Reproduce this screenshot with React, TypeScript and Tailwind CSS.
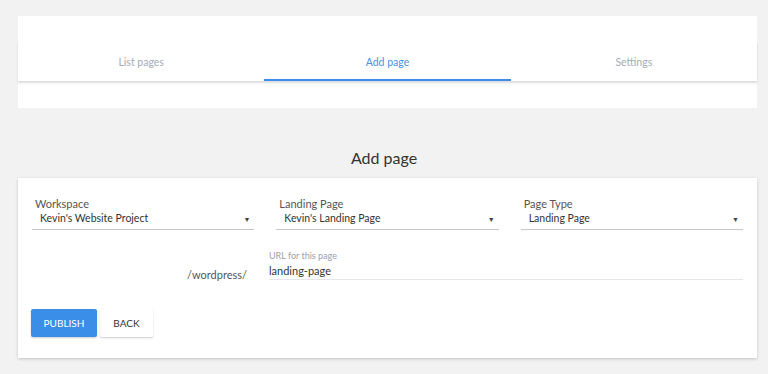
import React from "react";

const tabs = [
  { label: "List pages", active: false },
  { label: "Add page", active: true },
  { label: "Settings", active: false },
];

function Caret() {
  return <span className="text-[7px] text-[#444] leading-none">▼</span>;
}

function SelectField({ label, value }: { label: string; value: string }) {
  return (
    <div className="flex flex-col">
      <div className="pl-[3px] text-[11px] leading-[13px] text-[#555]">{label}</div>
      <div className="flex h-[20px] items-center justify-between border-b border-[#c5c8cd] pb-[1px] pl-[8px] pr-[4px]">
        <span className="text-[10.5px] text-[#333]">{value}</span>
        <Caret />
      </div>
    </div>
  );
}

export default function App() {
  return (
    <div
      className="h-[374px] w-full overflow-hidden bg-[#f2f2f2] pt-4"
      style={{ fontFamily: "Lato, 'Open Sans', sans-serif" }}
    >
      {/* tabs card */}
      <div className="ml-[18px] h-[92px] w-[739px] bg-white pt-[25px]">
        <div className="flex h-10 shadow-[0_2px_2px_rgba(0,0,0,0.14)]">
          {tabs.map((t) => (
            <div
              key={t.label}
              className={
                t.active
                  ? "flex flex-1 items-center justify-center border-b-2 border-[#3d8eea] pt-[6px] text-[10.5px] text-[#4a90e2]"
                  : "flex flex-1 items-center justify-center border-b-2 border-transparent pt-[6px] text-[10.5px] text-[#a3abb5]"
              }
            >
              {t.label}
            </div>
          ))}
        </div>
      </div>

      <h1 className="mt-[40px] mb-[10px] text-center text-[16px] leading-5 text-[#333]">Add page</h1>

      {/* form card */}
      <div className="ml-[18px] w-[739px] bg-white px-[14px] pt-[19px] pb-[21px] shadow-[0_1px_3px_rgba(0,0,0,0.2)]">
        <div className="grid grid-cols-3 gap-x-[22px]">
          <SelectField label="Workspace" value="Kevin's Website Project" />
          <SelectField label="Landing Page" value="Kevin's Landing Page" />
          <SelectField label="Page Type" value="Landing Page" />
        </div>

        <div className="mt-[20px] flex items-end">
          <div className="w-[237px] pr-[22px] text-right text-[11px] leading-[11px] text-[#555]">/wordpress/</div>
          <div className="flex flex-1 flex-col border-b border-[#e6e7e9]">
            <span className="text-[9px] leading-[11px] text-[#9aa1aa]">URL for this page</span>
            <span className="pb-[1px] pt-[3px] text-[11px] leading-[14px] text-[#333]">landing-page</span>
          </div>
        </div>

        <div className="-ml-px mt-[29px] flex gap-[3px]">
          <button className="h-[28px] w-[66px] rounded-[2px] bg-[#3a8ee8] text-[10px] text-white shadow-[0_1px_2px_rgba(0,0,0,0.2)]">
            PUBLISH
          </button>
          <button className="h-[28px] w-[53px] rounded-[2px] bg-white text-[10px] text-[#333] shadow-[0_1px_2px_rgba(0,0,0,0.2)]">
            BACK
          </button>
        </div>
      </div>
    </div>
  );
}
